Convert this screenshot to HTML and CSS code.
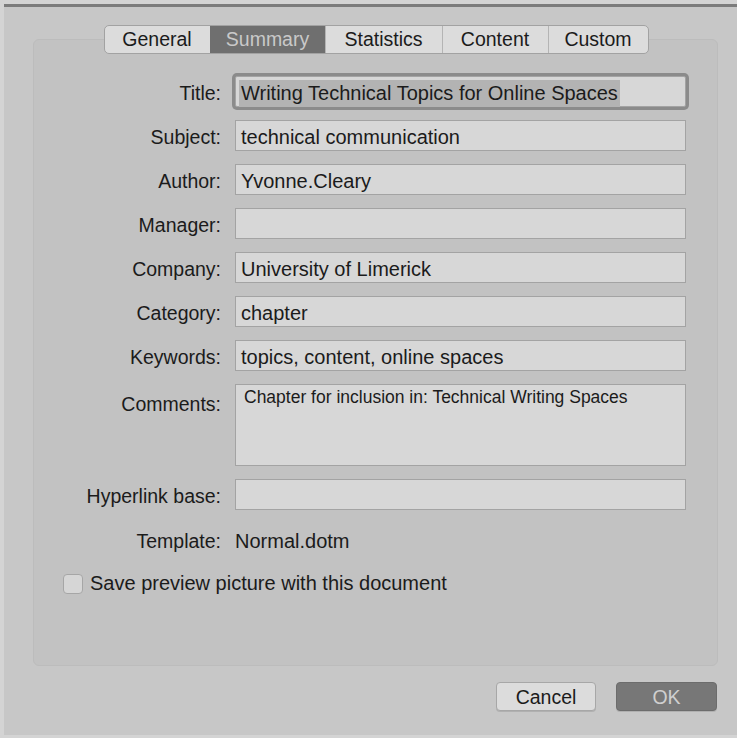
FILE: index.html
```html
<!DOCTYPE html>
<html lang="en">
<head>
<meta charset="utf-8">
<title>Properties</title>
<link rel="stylesheet" href="styles.css">
</head>
<body>
<div class="window">
  <div class="tabs">
    <div class="tab">General</div>
    <div class="tab tab-active">Summary</div>
    <div class="tab">Statistics</div>
    <div class="tab">Content</div>
    <div class="tab">Custom</div>
  </div>

  <div class="panel">
    <div class="form">
      <label class="label">Title:</label>
      <div class="field field-focus"><span class="selected">Writing Technical Topics for Online Spaces</span></div>

      <label class="label">Subject:</label>
      <div class="field">technical communication</div>

      <label class="label">Author:</label>
      <div class="field">Yvonne.Cleary</div>

      <label class="label">Manager:</label>
      <div class="field"></div>

      <label class="label">Company:</label>
      <div class="field">University of Limerick</div>

      <label class="label">Category:</label>
      <div class="field">chapter</div>

      <label class="label">Keywords:</label>
      <div class="field">topics, content, online spaces</div>

      <label class="label label-top">Comments:</label>
      <div class="field field-area">Chapter for inclusion in: Technical Writing Spaces</div>

      <label class="label">Hyperlink base:</label>
      <div class="field"></div>

      <span class="label label-plain">Template:</span>
      <span class="value-plain">Normal.dotm</span>
    </div>

    <div class="check-row">
      <span class="checkbox"></span>
      <span class="check-label">Save preview picture with this document</span>
    </div>
  </div>

  <div class="buttons">
    <div class="button">Cancel</div>
    <div class="button button-default">OK</div>
  </div>
</div>
</body>
</html>
```

FILE: styles.css
```css
* {
  box-sizing: border-box;
}

html, body {
  margin: 0;
  height: 100%;
}

body {
  background: #d4d4d4;
  font-family: "Liberation Sans", Arial, sans-serif;
  font-size: 19.5px;
  color: #1b1b1b;
  overflow: hidden;
}

.window {
  margin: 4px 0 3px 4px;
  height: 731px;
  border-top: 3px solid #7c7c7c;
  background: #c7c7c7;
  padding: 18px 19px 0 29px;
  display: flex;
  flex-direction: column;
}

/* segmented tab control */
.tabs {
  position: relative;
  z-index: 1;
  align-self: center;
  display: flex;
  height: 29px;
  border: 1px solid #a2a2a2;
  border-radius: 5px;
  background: #dcdcdc;
  overflow: hidden;
  margin-left: 1px;
}

.tab {
  display: flex;
  align-items: center;
  justify-content: center;
  padding: 1px 17px 0;
  border-left: 1px solid #b4b4b4;
  line-height: 1;
}

.tab:first-child {
  border-left: none;
  width: 105px;
}

.tab:nth-child(2) { width: 115px; }
.tab:nth-child(3) { width: 117px; }
.tab:nth-child(4) { width: 106px; }
.tab:nth-child(5) { width: 100px; }

.tab-active {
  background: #6f6f6f;
  color: #c9c9c9;
  border-left-color: #6f6f6f;
}

/* inset content box */
.panel {
  margin-top: -15px;
  height: 627px;
  border: 1px solid #bcbcbc;
  border-radius: 6px;
  background: #c2c2c2;
  padding-top: 36px;
}

.form {
  display: grid;
  grid-template-columns: 187px 451px;
  column-gap: 14px;
  row-gap: 13px;
}

.label {
  text-align: right;
  padding-top: 5px;
  line-height: 24px;
  white-space: nowrap;
}

.label-top {
  padding-top: 8px;
}

.label-plain,
.value-plain {
  padding-top: 6px;
  padding-bottom: 6px;
  line-height: 24px;
}

.value-plain {
  font-size: 20px;
}

.field {
  height: 31px;
  background: #d7d7d7;
  border: 1px solid #a3a3a3;
  padding: 4px 5px 0;
  font-size: 20px;
  line-height: 25px;
  white-space: nowrap;
}

.field-focus {
  border-radius: 2px;
  box-shadow: 0 0 0 3px #8b8b8b;
  padding-left: 3px;
}

.selected {
  background: #b3b3b3;
  padding: 2px 2px 3px;
}

.field-area {
  height: 82px;
  font-size: 17.5px;
  line-height: 1;
  padding: 4px 8px;
}

.check-row {
  display: flex;
  align-items: center;
  margin-top: 13px;
  padding-left: 29px;
  gap: 7px;
}

.check-label {
  font-size: 20px;
}

.checkbox {
  width: 20px;
  height: 20px;
  border: 1px solid #a6a6a6;
  border-radius: 4px;
  background: #d6d6d6;
}

.buttons {
  display: flex;
  justify-content: flex-end;
  gap: 20px;
  margin-top: 16px;
  padding-right: 1px;
}

.button {
  width: 100px;
  height: 29px;
  display: flex;
  align-items: center;
  justify-content: center;
  padding-top: 2px;
  border: 1px solid #a7a7a7;
  border-radius: 4px;
  background: #dcdcdc;
  box-shadow: 0 1px 0 #b0b0b0;
}

.button-default {
  width: 101px;
  background: #777777;
  border-color: #6c6c6c;
  color: #cfcfcf;
}
```
